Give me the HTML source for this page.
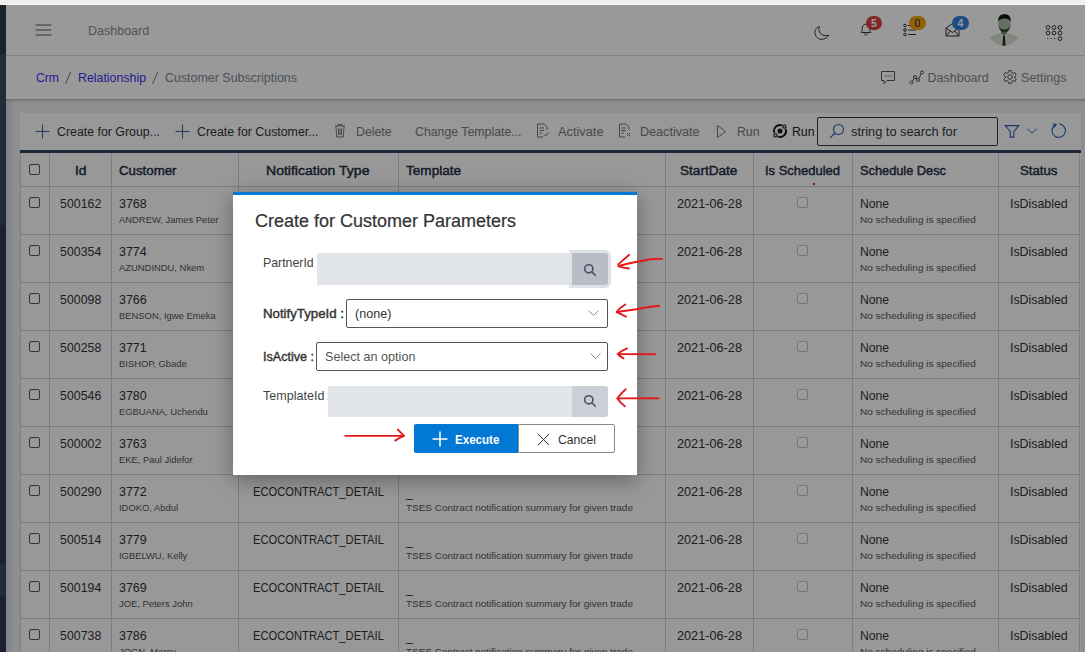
<!DOCTYPE html>
<html><head><meta charset="utf-8"><style>
html,body{margin:0;padding:0;width:1085px;height:652px;overflow:hidden;background:#fff;}
body{position:relative;font-family:"Liberation Sans",sans-serif;}
.a{position:absolute;}
.t{position:absolute;white-space:nowrap;line-height:1;}
.badge{position:absolute;border-radius:8px;color:#fff;font-size:10.5px;font-weight:700;text-align:center;line-height:14px;font-family:"Liberation Sans",sans-serif;}
</style></head><body>
<div class="a" style="left:0px;top:0px;width:1085px;height:5px;background:#efefef;"></div>
<div class="a" style="left:0px;top:4px;width:1085px;height:1px;background:#f6f6f6;"></div>
<div class="a" style="left:0px;top:5px;width:6px;height:647px;background:#2d3750;"></div>
<div class="a" style="left:0px;top:54px;width:6px;height:171px;background:#38495f;"></div>
<div class="a" style="left:0px;top:563px;width:6px;height:32px;background:#38495f;"></div>
<div class="a" style="left:6px;top:99px;width:1079px;height:553px;background:#eceef2;"></div>
<div class="a" style="left:6px;top:99px;width:8px;height:553px;background:linear-gradient(to right,rgba(0,0,0,0.10),rgba(0,0,0,0));"></div>
<div class="a" style="left:6px;top:5px;width:1079px;height:50px;background:#fff;border-bottom:1px solid #dadada;"></div>
<div class="a" style="left:6px;top:56px;width:1079px;height:43px;background:#fff;"></div>
<div class="a" style="left:6px;top:99px;width:1079px;height:4px;background:linear-gradient(to bottom,rgba(0,0,0,0.22),rgba(0,0,0,0.05) 60%,rgba(0,0,0,0));"></div>
<svg class="a" style="left:35px;top:24.3px" width="17" height="12" viewBox="0 0 17 12"><g stroke="#50555f" stroke-width="1.0" stroke-linecap="round"><line x1="1" y1="1" x2="16" y2="1"/><line x1="1" y1="6" x2="16" y2="6"/><line x1="1" y1="11" x2="16" y2="11"/></g></svg>
<div class="t" style="left:88.00px;top:24.82px;font-size:12.5px;font-weight:400;color:#8a8a8a;">Dashboard</div>
<svg class="a" style="left:813px;top:25px" width="17" height="16" viewBox="0 0 17 16"><path d="M6.5 1.5 C3 2.5 1.5 5.5 2 8.5 C2.6 12 5.6 14.5 9.2 14.3 C12 14.1 14.3 12.5 15.5 10.2 C11.5 11.8 7 9.5 6 5.6 C5.7 4.2 5.8 2.8 6.5 1.5 Z" fill="none" stroke="#333" stroke-width="1"/></svg>
<svg class="a" style="left:859px;top:22.3px" width="14" height="14" viewBox="0 0 14 14"><path d="M2.2 10.5 C3.2 9.5 3.2 8.5 3.2 6.5 C3.2 3.8 4.8 2.2 7 2.2 C9.2 2.2 10.8 3.8 10.8 6.5 C10.8 8.5 10.8 9.5 11.8 10.5 Z M5.5 11.5 C5.7 12.6 6.2 13 7 13 C7.8 13 8.3 12.6 8.5 11.5" fill="none" stroke="#333" stroke-width="1"/></svg>
<div class="badge" style="left:866px;top:16px;width:16px;height:14px;background:#dc3f3f;">5</div>
<svg class="a" style="left:903px;top:23px" width="14" height="14" viewBox="0 0 14 14"><g fill="none" stroke="#333" stroke-width="1"><circle cx="2" cy="2.5" r="1.3"/><circle cx="2" cy="7" r="1.3"/><circle cx="2" cy="11.5" r="1.3"/><line x1="5" y1="2.5" x2="13" y2="2.5"/><line x1="5" y1="7" x2="13" y2="7"/><line x1="5" y1="11.5" x2="13" y2="11.5"/></g></svg>
<div class="badge" style="left:909px;top:16px;width:17px;height:14px;background:#f2a20c;color:#1d2a44;font-weight:400;">0</div>
<svg class="a" style="left:945px;top:22px" width="15" height="15" viewBox="0 0 15 15"><g fill="none" stroke="#333" stroke-width="1"><path d="M1 6 L7.5 1.5 L14 6 L14 14 L1 14 Z"/><path d="M1 6 L7.5 10.5 L14 6"/><path d="M1 14 L5.5 9"/><path d="M14 14 L9.5 9"/></g></svg>
<div class="badge" style="left:952px;top:16px;width:17px;height:14px;background:#2d7fdc;">4</div>
<svg class="a" style="left:987px;top:12px" width="34" height="36" viewBox="0 0 34 36">
<defs><clipPath id="cc"><circle cx="17" cy="18.5" r="15.2"/></clipPath></defs>
<g clip-path="url(#cc)"><path d="M0 36 L0 26 C4 24 9 22.5 14 21.5 L17 22 L20 21.5 C25 22.5 30 24 34 26 L34 36 Z" fill="#d4e2d0"/>
<path d="M14 21.5 L17 24 L20 21.5 L19.5 36 L14.5 36 Z" fill="#f2f6f2"/>
<path d="M16 23.5 L18 23.5 L18.8 36 L15.2 36 Z" fill="#2e302e"/>
<path d="M14 18 L20 18 L20 21.5 L17 24 L14 21.5 Z" fill="#8a9a88"/></g>
<ellipse cx="17.5" cy="12" rx="6.2" ry="8.6" fill="#a9bca6"/>
<path d="M11.2 10 C11 4.5 13.2 2.2 17.5 2.2 C21.8 2.2 24 4.5 23.8 10 C22.6 7.2 20.5 6.6 17.5 6.6 C14.5 6.6 12.4 7.2 11.2 10 Z" fill="#151515"/>
<path d="M11.6 13 C12.4 19 15 20.6 17.5 20.6 C20 20.6 22.6 19 23.4 13 C22.4 16.5 20 17.5 17.5 17.5 C15 17.5 12.6 16.5 11.6 13 Z" fill="#3a423a"/>
</svg>
<svg class="a" style="left:1044px;top:23px" width="20" height="19" viewBox="0 0 20 19"><g fill="none" stroke="#333" stroke-width="1"><circle cx="4" cy="4.5" r="1.9"/><circle cx="10" cy="4.5" r="1.9"/><circle cx="16" cy="4.5" r="1.9"/><circle cx="4" cy="10" r="1.9"/><circle cx="10" cy="10" r="1.9"/><circle cx="16" cy="10" r="1.9"/><circle cx="16" cy="15.6" r="1.9"/></g><g fill="#444"><rect x="3.2" y="15" width="1.1" height="1.1"/><rect x="6.6" y="15" width="1.1" height="1.1"/><rect x="10" y="15" width="1.1" height="1.1"/></g></svg>
<div class="t" style="left:35.50px;top:71.82px;font-size:12.5px;font-weight:400;color:#3a2ff2;transform:scaleX(0.9745);transform-origin:0 0;">Crm</div>
<svg class="a" style="left:64px;top:71px" width="8" height="14" viewBox="0 0 8 14"><line x1="6.6" y1="1.3" x2="1.6" y2="12.6" stroke="#7d8595" stroke-width="1.1"/></svg>
<div class="t" style="left:77.50px;top:71.82px;font-size:12.5px;font-weight:400;color:#3a2ff2;transform:scaleX(0.9885);transform-origin:0 0;">Relationship</div>
<svg class="a" style="left:151px;top:71px" width="8" height="14" viewBox="0 0 8 14"><line x1="6.6" y1="1.3" x2="1.6" y2="12.6" stroke="#7d8595" stroke-width="1.1"/></svg>
<div class="t" style="left:164.50px;top:71.82px;font-size:12.5px;font-weight:400;color:#7d8595;transform:scaleX(0.9948);transform-origin:0 0;">Customer Subscriptions</div>
<svg class="a" style="left:880px;top:70px" width="16" height="15" viewBox="0 0 16 15"><path d="M1.5 1.5 H14.5 V10.5 H7 L4 13.5 V10.5 H1.5 Z" fill="none" stroke="#555" stroke-width="1"/><g fill="#555"><rect x="5" y="5.5" width="1.2" height="1.2"/><rect x="7.5" y="5.5" width="1.2" height="1.2"/><rect x="10" y="5.5" width="1.2" height="1.2"/></g></svg>
<svg class="a" style="left:909px;top:70px" width="16" height="15" viewBox="0 0 16 15"><g fill="none" stroke="#555" stroke-width="1"><path d="M2.5 12.5 L6 7 L9 10 L13 2.5"/><circle cx="2.5" cy="12.5" r="1.5" fill="#fff"/><circle cx="6" cy="7" r="1.5" fill="#fff"/><circle cx="9" cy="10" r="1.5" fill="#fff"/><circle cx="13" cy="2.5" r="1.5" fill="#fff"/></g></svg>
<div class="t" style="left:927.50px;top:71.82px;font-size:12.5px;font-weight:400;color:#858585;">Dashboard</div>
<svg class="a" style="left:1002px;top:69px" width="16" height="16" viewBox="0 0 16 16"><g fill="none" stroke="#555" stroke-width="1"><circle cx="8" cy="8" r="2.3"/><path d="M6.8 1.5 H9.2 L9.6 3.4 L11.2 4.3 L13 3.6 L14.2 5.7 L12.8 7 V9 L14.2 10.3 L13 12.4 L11.2 11.7 L9.6 12.6 L9.2 14.5 H6.8 L6.4 12.6 L4.8 11.7 L3 12.4 L1.8 10.3 L3.2 9 V7 L1.8 5.7 L3 3.6 L4.8 4.3 L6.4 3.4 Z"/></g></svg>
<div class="t" style="left:1020.50px;top:71.82px;font-size:12.5px;font-weight:400;color:#858585;transform:scaleX(1.0074);transform-origin:0 0;">Settings</div>
<div class="a" style="left:20px;top:113px;width:1061px;height:37px;background:#fdfdfd;"></div>
<svg class="a" style="left:35px;top:124px" width="15" height="15" viewBox="0 0 15 15"><g stroke="#4a6a9a" stroke-width="1.1"><line x1="7.5" y1="0.5" x2="7.5" y2="14.5"/><line x1="0.5" y1="7.5" x2="14.5" y2="7.5"/></g></svg>
<div class="t" style="left:56.50px;top:126.02px;font-size:12.5px;font-weight:400;color:#333;transform:scaleX(0.9884);transform-origin:0 0;">Create for Group...</div>
<svg class="a" style="left:175px;top:124px" width="15" height="15" viewBox="0 0 15 15"><g stroke="#4a6a9a" stroke-width="1.1"><line x1="7.5" y1="0.5" x2="7.5" y2="14.5"/><line x1="0.5" y1="7.5" x2="14.5" y2="7.5"/></g></svg>
<div class="t" style="left:196.50px;top:126.02px;font-size:12.5px;font-weight:400;color:#333;transform:scaleX(0.9881);transform-origin:0 0;">Create for Customer...</div>
<svg class="a" style="left:334px;top:123px" width="12" height="15" viewBox="0 0 12 15"><g fill="none" stroke="#777" stroke-width="1"><path d="M1 3 H11"/><path d="M4 3 V1.5 H8 V3"/><path d="M2 3 L2.6 14 H9.4 L10 3"/><path d="M4.5 5.5 V12 M6 5.5 V12 M7.5 5.5 V12"/></g></svg>
<div class="t" style="left:355.50px;top:126.02px;font-size:12.5px;font-weight:400;color:#7a7a7a;transform:scaleX(0.9853);transform-origin:0 0;">Delete</div>
<div class="t" style="left:414.50px;top:126.02px;font-size:12.5px;font-weight:400;color:#7a7a7a;transform:scaleX(0.9846);transform-origin:0 0;">Change Template...</div>
<svg class="a" style="left:536px;top:123px" width="14" height="15" viewBox="0 0 14 15"><g fill="none" stroke="#777" stroke-width="1"><path d="M1.5 1 H8 L11 4 V7"/><path d="M1.5 1 V14 H7"/><path d="M3.5 5 H8 M3.5 7.5 H8 M3.5 10 H6"/><path d="M8 11.5 L9.5 13 L12.5 9.5"/></g></svg>
<div class="t" style="left:557.50px;top:126.02px;font-size:12.5px;font-weight:400;color:#7a7a7a;transform:scaleX(1.0233);transform-origin:0 0;">Activate</div>
<svg class="a" style="left:618px;top:123px" width="14" height="15" viewBox="0 0 14 15"><g fill="none" stroke="#777" stroke-width="1"><path d="M1.5 1 H8 L11 4 V7"/><path d="M1.5 1 V14 H7"/><path d="M3.5 5 H8 M3.5 7.5 H8 M3.5 10 H6"/><path d="M9 10 L12 13 M12 10 L9 13"/></g></svg>
<div class="t" style="left:639.50px;top:126.02px;font-size:12.5px;font-weight:400;color:#7a7a7a;transform:scaleX(1.0075);transform-origin:0 0;">Deactivate</div>
<svg class="a" style="left:716px;top:124px" width="11" height="15" viewBox="0 0 11 15"><path d="M1.5 1.5 L9.5 7.5 L1.5 13.5 Z" fill="none" stroke="#777" stroke-width="1"/></svg>
<div class="t" style="left:736.50px;top:126.02px;font-size:12.5px;font-weight:400;color:#7a7a7a;transform:scaleX(0.9813);transform-origin:0 0;">Run</div>
<svg class="a" style="left:771px;top:123px" width="18" height="17" viewBox="0 0 18 17"><g fill="none" stroke="#1a1a1a" stroke-width="1.9"><path d="M14.64 5.95 A6 6 0 0 1 6.95 13.64"/><path d="M3.36 10.05 A6 6 0 0 1 11.05 2.36"/></g><g fill="none" stroke="#1a1a1a" stroke-width="1.2"><circle cx="13.4" cy="3.6" r="1.6"/><circle cx="4.6" cy="12.4" r="1.6"/></g><circle cx="9" cy="8" r="2.5" fill="#1a1a1a"/></svg>
<div class="t" style="left:792.00px;top:126.02px;font-size:12.5px;font-weight:400;color:#222;transform:scaleX(0.9813);transform-origin:0 0;">Run</div>
<div class="a" style="left:817px;top:117px;width:179px;height:27px;background:#fff;border:1px solid #333;border-radius:2px;"></div>
<svg class="a" style="left:829px;top:123px" width="16" height="16" viewBox="0 0 16 16"><g fill="none" stroke="#2f63bd" stroke-width="1.1"><circle cx="9.5" cy="6.5" r="5"/><line x1="6" y1="10" x2="1" y2="15"/></g></svg>
<div class="t" style="left:850.50px;top:126.02px;font-size:12.5px;font-weight:400;color:#333;transform:scaleX(1.0240);transform-origin:0 0;">string to search for</div>
<svg class="a" style="left:1004px;top:123.5px" width="16" height="15" viewBox="0 0 16 15"><path d="M1.2 1.6 H14.8 L9.9 7.5 V13.1 H6.3 V7.5 Z" fill="none" stroke="#2b5db0" stroke-width="1.1" stroke-linejoin="miter"/></svg>
<svg class="a" style="left:1026px;top:127px" width="12" height="8" viewBox="0 0 12 8"><path d="M1 1.5 L6 6 L11 1.5" fill="none" stroke="#2f63bd" stroke-width="1"/></svg>
<svg class="a" style="left:1050px;top:122px" width="18" height="17" viewBox="0 0 18 17"><g fill="none" stroke="#2f63bd" stroke-width="1.1"><path d="M4.5 3.5 A6.7 6.7 0 1 0 9 2"/></g><path d="M2.5 1.5 L7 2 L4.5 6 Z" fill="#2f63bd"/></svg>
<div class="a" style="left:20px;top:150px;width:1061px;height:3px;background:#33415e;"></div>
<div class="a" style="left:20px;top:153px;width:1061px;height:499px;background:#fdfdfd;"></div>
<div class="a" style="left:20px;top:153px;width:1px;height:499px;background:#ced1d7;"></div>
<div class="a" style="left:49px;top:153px;width:1px;height:499px;background:#ced1d7;"></div>
<div class="a" style="left:111px;top:153px;width:1px;height:499px;background:#ced1d7;"></div>
<div class="a" style="left:238px;top:153px;width:1px;height:499px;background:#ced1d7;"></div>
<div class="a" style="left:398px;top:153px;width:1px;height:499px;background:#ced1d7;"></div>
<div class="a" style="left:665px;top:153px;width:1px;height:499px;background:#ced1d7;"></div>
<div class="a" style="left:753px;top:153px;width:1px;height:499px;background:#ced1d7;"></div>
<div class="a" style="left:852px;top:153px;width:1px;height:499px;background:#ced1d7;"></div>
<div class="a" style="left:998px;top:153px;width:1px;height:499px;background:#ced1d7;"></div>
<div class="a" style="left:1079px;top:153px;width:1px;height:499px;background:#ced1d7;"></div>
<div class="a" style="left:20px;top:186px;width:1060px;height:1px;background:#ced1d7;"></div>
<div class="a" style="left:20px;top:234px;width:1060px;height:1px;background:#ced1d7;"></div>
<div class="a" style="left:20px;top:282px;width:1060px;height:1px;background:#ced1d7;"></div>
<div class="a" style="left:20px;top:330px;width:1060px;height:1px;background:#ced1d7;"></div>
<div class="a" style="left:20px;top:378px;width:1060px;height:1px;background:#ced1d7;"></div>
<div class="a" style="left:20px;top:426px;width:1060px;height:1px;background:#ced1d7;"></div>
<div class="a" style="left:20px;top:474px;width:1060px;height:1px;background:#ced1d7;"></div>
<div class="a" style="left:20px;top:522px;width:1060px;height:1px;background:#ced1d7;"></div>
<div class="a" style="left:20px;top:570px;width:1060px;height:1px;background:#ced1d7;"></div>
<div class="a" style="left:20px;top:618px;width:1060px;height:1px;background:#ced1d7;"></div>
<div class="a" style="left:29px;top:164px;width:11px;height:11px;box-sizing:border-box;border:1px solid #555;border-radius:2px;background:#fff;"></div>
<div class="t" style="left:74.75px;top:164.59px;font-size:12.3px;font-weight:400;color:#1f2c44;transform:scaleX(1.1211);transform-origin:0 0;-webkit-text-stroke:0.4px #1f2c44;">Id</div>
<div class="t" style="left:119.00px;top:164.59px;font-size:12.3px;font-weight:400;color:#1f2c44;transform:scaleX(1.0785);transform-origin:0 0;-webkit-text-stroke:0.4px #1f2c44;">Customer</div>
<div class="t" style="left:266.25px;top:164.59px;font-size:12.3px;font-weight:400;color:#1f2c44;transform:scaleX(1.1410);transform-origin:0 0;-webkit-text-stroke:0.4px #1f2c44;">Notification Type</div>
<div class="t" style="left:405.50px;top:164.59px;font-size:12.3px;font-weight:400;color:#1f2c44;transform:scaleX(1.1060);transform-origin:0 0;-webkit-text-stroke:0.4px #1f2c44;">Template</div>
<div class="t" style="left:680.30px;top:164.59px;font-size:12.3px;font-weight:400;color:#1f2c44;transform:scaleX(1.1048);transform-origin:0 0;-webkit-text-stroke:0.4px #1f2c44;">StartDate</div>
<div class="t" style="left:765.00px;top:164.59px;font-size:12.3px;font-weight:400;color:#1f2c44;transform:scaleX(1.0546);transform-origin:0 0;-webkit-text-stroke:0.4px #1f2c44;">Is Scheduled</div>
<div class="t" style="left:859.50px;top:164.59px;font-size:12.3px;font-weight:400;color:#1f2c44;transform:scaleX(1.0395);transform-origin:0 0;-webkit-text-stroke:0.4px #1f2c44;">Schedule Desc</div>
<div class="t" style="left:1019.80px;top:164.59px;font-size:12.3px;font-weight:400;color:#1f2c44;transform:scaleX(1.0725);transform-origin:0 0;-webkit-text-stroke:0.4px #1f2c44;">Status</div>
<div class="a" style="left:813px;top:183px;width:2px;height:2px;background:#ff2020;"></div>
<div class="a" style="left:29px;top:197px;width:11px;height:11px;box-sizing:border-box;border:1px solid #555;border-radius:2px;background:#fff;"></div>
<div class="t" style="left:59.85px;top:198.37px;font-size:12.2px;font-weight:400;color:#333;transform:scaleX(1.0146);transform-origin:0 0;">500162</div>
<div class="t" style="left:119.00px;top:198.37px;font-size:12.2px;font-weight:400;color:#333;transform:scaleX(1.0207);transform-origin:0 0;">3768</div>
<div class="t" style="left:119.00px;top:214.87px;font-size:9.6px;font-weight:400;color:#555;transform:scaleX(0.98);transform-origin:0 0;">ANDREW, James Peter</div>
<div class="t" style="left:252.50px;top:198.37px;font-size:12.2px;font-weight:400;color:#333;transform:scaleX(0.9174);transform-origin:0 0;">ECOCONTRACT_DETAIL</div>
<div class="t" style="left:406.00px;top:198.67px;font-size:12.2px;font-weight:400;color:#333;">_</div>
<div class="t" style="left:406.00px;top:214.70px;font-size:9.8px;font-weight:400;color:#555;transform:scaleX(1.0165);transform-origin:0 0;">TSES Contract notification summary for given trade</div>
<div class="t" style="left:676.50px;top:198.37px;font-size:12.2px;font-weight:400;color:#333;transform:scaleX(1.0417);transform-origin:0 0;">2021-06-28</div>
<div class="a" style="left:797px;top:197px;width:11px;height:11px;box-sizing:border-box;border:1px solid #c4c4c4;border-radius:2px;background:#fff;"></div>
<div class="t" style="left:860.00px;top:198.37px;font-size:12.2px;font-weight:400;color:#333;">None</div>
<div class="t" style="left:860.00px;top:214.70px;font-size:9.8px;font-weight:400;color:#555;transform:scaleX(1.0220);transform-origin:0 0;">No scheduling is specified</div>
<div class="t" style="left:1009.60px;top:198.37px;font-size:12.2px;font-weight:400;color:#333;transform:scaleX(1.0148);transform-origin:0 0;">IsDisabled</div>
<div class="a" style="left:29px;top:245px;width:11px;height:11px;box-sizing:border-box;border:1px solid #555;border-radius:2px;background:#fff;"></div>
<div class="t" style="left:59.85px;top:246.37px;font-size:12.2px;font-weight:400;color:#333;transform:scaleX(1.0146);transform-origin:0 0;">500354</div>
<div class="t" style="left:119.00px;top:246.37px;font-size:12.2px;font-weight:400;color:#333;transform:scaleX(1.0207);transform-origin:0 0;">3774</div>
<div class="t" style="left:119.00px;top:262.87px;font-size:9.6px;font-weight:400;color:#555;transform:scaleX(0.98);transform-origin:0 0;">AZUNDINDU, Nkem</div>
<div class="t" style="left:252.50px;top:246.37px;font-size:12.2px;font-weight:400;color:#333;transform:scaleX(0.9174);transform-origin:0 0;">ECOCONTRACT_DETAIL</div>
<div class="t" style="left:406.00px;top:246.67px;font-size:12.2px;font-weight:400;color:#333;">_</div>
<div class="t" style="left:406.00px;top:262.70px;font-size:9.8px;font-weight:400;color:#555;transform:scaleX(1.0165);transform-origin:0 0;">TSES Contract notification summary for given trade</div>
<div class="t" style="left:676.50px;top:246.37px;font-size:12.2px;font-weight:400;color:#333;transform:scaleX(1.0417);transform-origin:0 0;">2021-06-28</div>
<div class="a" style="left:797px;top:245px;width:11px;height:11px;box-sizing:border-box;border:1px solid #c4c4c4;border-radius:2px;background:#fff;"></div>
<div class="t" style="left:860.00px;top:246.37px;font-size:12.2px;font-weight:400;color:#333;">None</div>
<div class="t" style="left:860.00px;top:262.70px;font-size:9.8px;font-weight:400;color:#555;transform:scaleX(1.0220);transform-origin:0 0;">No scheduling is specified</div>
<div class="t" style="left:1009.60px;top:246.37px;font-size:12.2px;font-weight:400;color:#333;transform:scaleX(1.0148);transform-origin:0 0;">IsDisabled</div>
<div class="a" style="left:29px;top:293px;width:11px;height:11px;box-sizing:border-box;border:1px solid #555;border-radius:2px;background:#fff;"></div>
<div class="t" style="left:59.85px;top:294.37px;font-size:12.2px;font-weight:400;color:#333;transform:scaleX(1.0146);transform-origin:0 0;">500098</div>
<div class="t" style="left:119.00px;top:294.37px;font-size:12.2px;font-weight:400;color:#333;transform:scaleX(1.0207);transform-origin:0 0;">3766</div>
<div class="t" style="left:119.00px;top:310.87px;font-size:9.6px;font-weight:400;color:#555;transform:scaleX(0.98);transform-origin:0 0;">BENSON, Igwe Emeka</div>
<div class="t" style="left:252.50px;top:294.37px;font-size:12.2px;font-weight:400;color:#333;transform:scaleX(0.9174);transform-origin:0 0;">ECOCONTRACT_DETAIL</div>
<div class="t" style="left:406.00px;top:294.67px;font-size:12.2px;font-weight:400;color:#333;">_</div>
<div class="t" style="left:406.00px;top:310.70px;font-size:9.8px;font-weight:400;color:#555;transform:scaleX(1.0165);transform-origin:0 0;">TSES Contract notification summary for given trade</div>
<div class="t" style="left:676.50px;top:294.37px;font-size:12.2px;font-weight:400;color:#333;transform:scaleX(1.0417);transform-origin:0 0;">2021-06-28</div>
<div class="a" style="left:797px;top:293px;width:11px;height:11px;box-sizing:border-box;border:1px solid #c4c4c4;border-radius:2px;background:#fff;"></div>
<div class="t" style="left:860.00px;top:294.37px;font-size:12.2px;font-weight:400;color:#333;">None</div>
<div class="t" style="left:860.00px;top:310.70px;font-size:9.8px;font-weight:400;color:#555;transform:scaleX(1.0220);transform-origin:0 0;">No scheduling is specified</div>
<div class="t" style="left:1009.60px;top:294.37px;font-size:12.2px;font-weight:400;color:#333;transform:scaleX(1.0148);transform-origin:0 0;">IsDisabled</div>
<div class="a" style="left:29px;top:341px;width:11px;height:11px;box-sizing:border-box;border:1px solid #555;border-radius:2px;background:#fff;"></div>
<div class="t" style="left:59.85px;top:342.37px;font-size:12.2px;font-weight:400;color:#333;transform:scaleX(1.0146);transform-origin:0 0;">500258</div>
<div class="t" style="left:119.00px;top:342.37px;font-size:12.2px;font-weight:400;color:#333;transform:scaleX(1.0207);transform-origin:0 0;">3771</div>
<div class="t" style="left:119.00px;top:358.87px;font-size:9.6px;font-weight:400;color:#555;transform:scaleX(0.98);transform-origin:0 0;">BISHOP, Gbade</div>
<div class="t" style="left:252.50px;top:342.37px;font-size:12.2px;font-weight:400;color:#333;transform:scaleX(0.9174);transform-origin:0 0;">ECOCONTRACT_DETAIL</div>
<div class="t" style="left:406.00px;top:342.67px;font-size:12.2px;font-weight:400;color:#333;">_</div>
<div class="t" style="left:406.00px;top:358.70px;font-size:9.8px;font-weight:400;color:#555;transform:scaleX(1.0165);transform-origin:0 0;">TSES Contract notification summary for given trade</div>
<div class="t" style="left:676.50px;top:342.37px;font-size:12.2px;font-weight:400;color:#333;transform:scaleX(1.0417);transform-origin:0 0;">2021-06-28</div>
<div class="a" style="left:797px;top:341px;width:11px;height:11px;box-sizing:border-box;border:1px solid #c4c4c4;border-radius:2px;background:#fff;"></div>
<div class="t" style="left:860.00px;top:342.37px;font-size:12.2px;font-weight:400;color:#333;">None</div>
<div class="t" style="left:860.00px;top:358.70px;font-size:9.8px;font-weight:400;color:#555;transform:scaleX(1.0220);transform-origin:0 0;">No scheduling is specified</div>
<div class="t" style="left:1009.60px;top:342.37px;font-size:12.2px;font-weight:400;color:#333;transform:scaleX(1.0148);transform-origin:0 0;">IsDisabled</div>
<div class="a" style="left:29px;top:389px;width:11px;height:11px;box-sizing:border-box;border:1px solid #555;border-radius:2px;background:#fff;"></div>
<div class="t" style="left:59.85px;top:390.37px;font-size:12.2px;font-weight:400;color:#333;transform:scaleX(1.0146);transform-origin:0 0;">500546</div>
<div class="t" style="left:119.00px;top:390.37px;font-size:12.2px;font-weight:400;color:#333;transform:scaleX(1.0207);transform-origin:0 0;">3780</div>
<div class="t" style="left:119.00px;top:406.87px;font-size:9.6px;font-weight:400;color:#555;transform:scaleX(0.98);transform-origin:0 0;">EGBUANA, Uchendu</div>
<div class="t" style="left:252.50px;top:390.37px;font-size:12.2px;font-weight:400;color:#333;transform:scaleX(0.9174);transform-origin:0 0;">ECOCONTRACT_DETAIL</div>
<div class="t" style="left:406.00px;top:390.67px;font-size:12.2px;font-weight:400;color:#333;">_</div>
<div class="t" style="left:406.00px;top:406.70px;font-size:9.8px;font-weight:400;color:#555;transform:scaleX(1.0165);transform-origin:0 0;">TSES Contract notification summary for given trade</div>
<div class="t" style="left:676.50px;top:390.37px;font-size:12.2px;font-weight:400;color:#333;transform:scaleX(1.0417);transform-origin:0 0;">2021-06-28</div>
<div class="a" style="left:797px;top:389px;width:11px;height:11px;box-sizing:border-box;border:1px solid #c4c4c4;border-radius:2px;background:#fff;"></div>
<div class="t" style="left:860.00px;top:390.37px;font-size:12.2px;font-weight:400;color:#333;">None</div>
<div class="t" style="left:860.00px;top:406.70px;font-size:9.8px;font-weight:400;color:#555;transform:scaleX(1.0220);transform-origin:0 0;">No scheduling is specified</div>
<div class="t" style="left:1009.60px;top:390.37px;font-size:12.2px;font-weight:400;color:#333;transform:scaleX(1.0148);transform-origin:0 0;">IsDisabled</div>
<div class="a" style="left:29px;top:437px;width:11px;height:11px;box-sizing:border-box;border:1px solid #555;border-radius:2px;background:#fff;"></div>
<div class="t" style="left:59.85px;top:438.37px;font-size:12.2px;font-weight:400;color:#333;transform:scaleX(1.0146);transform-origin:0 0;">500002</div>
<div class="t" style="left:119.00px;top:438.37px;font-size:12.2px;font-weight:400;color:#333;transform:scaleX(1.0207);transform-origin:0 0;">3763</div>
<div class="t" style="left:119.00px;top:454.87px;font-size:9.6px;font-weight:400;color:#555;transform:scaleX(0.98);transform-origin:0 0;">EKE, Paul Jidefor</div>
<div class="t" style="left:252.50px;top:438.37px;font-size:12.2px;font-weight:400;color:#333;transform:scaleX(0.9174);transform-origin:0 0;">ECOCONTRACT_DETAIL</div>
<div class="t" style="left:406.00px;top:438.67px;font-size:12.2px;font-weight:400;color:#333;">_</div>
<div class="t" style="left:406.00px;top:454.70px;font-size:9.8px;font-weight:400;color:#555;transform:scaleX(1.0165);transform-origin:0 0;">TSES Contract notification summary for given trade</div>
<div class="t" style="left:676.50px;top:438.37px;font-size:12.2px;font-weight:400;color:#333;transform:scaleX(1.0417);transform-origin:0 0;">2021-06-28</div>
<div class="a" style="left:797px;top:437px;width:11px;height:11px;box-sizing:border-box;border:1px solid #c4c4c4;border-radius:2px;background:#fff;"></div>
<div class="t" style="left:860.00px;top:438.37px;font-size:12.2px;font-weight:400;color:#333;">None</div>
<div class="t" style="left:860.00px;top:454.70px;font-size:9.8px;font-weight:400;color:#555;transform:scaleX(1.0220);transform-origin:0 0;">No scheduling is specified</div>
<div class="t" style="left:1009.60px;top:438.37px;font-size:12.2px;font-weight:400;color:#333;transform:scaleX(1.0148);transform-origin:0 0;">IsDisabled</div>
<div class="a" style="left:29px;top:485px;width:11px;height:11px;box-sizing:border-box;border:1px solid #555;border-radius:2px;background:#fff;"></div>
<div class="t" style="left:59.85px;top:486.37px;font-size:12.2px;font-weight:400;color:#333;transform:scaleX(1.0146);transform-origin:0 0;">500290</div>
<div class="t" style="left:119.00px;top:486.37px;font-size:12.2px;font-weight:400;color:#333;transform:scaleX(1.0207);transform-origin:0 0;">3772</div>
<div class="t" style="left:119.00px;top:502.87px;font-size:9.6px;font-weight:400;color:#555;transform:scaleX(0.98);transform-origin:0 0;">IDOKO, Abdul</div>
<div class="t" style="left:252.50px;top:486.37px;font-size:12.2px;font-weight:400;color:#333;transform:scaleX(0.9174);transform-origin:0 0;">ECOCONTRACT_DETAIL</div>
<div class="t" style="left:406.00px;top:486.67px;font-size:12.2px;font-weight:400;color:#333;">_</div>
<div class="t" style="left:406.00px;top:502.70px;font-size:9.8px;font-weight:400;color:#555;transform:scaleX(1.0165);transform-origin:0 0;">TSES Contract notification summary for given trade</div>
<div class="t" style="left:676.50px;top:486.37px;font-size:12.2px;font-weight:400;color:#333;transform:scaleX(1.0417);transform-origin:0 0;">2021-06-28</div>
<div class="a" style="left:797px;top:485px;width:11px;height:11px;box-sizing:border-box;border:1px solid #c4c4c4;border-radius:2px;background:#fff;"></div>
<div class="t" style="left:860.00px;top:486.37px;font-size:12.2px;font-weight:400;color:#333;">None</div>
<div class="t" style="left:860.00px;top:502.70px;font-size:9.8px;font-weight:400;color:#555;transform:scaleX(1.0220);transform-origin:0 0;">No scheduling is specified</div>
<div class="t" style="left:1009.60px;top:486.37px;font-size:12.2px;font-weight:400;color:#333;transform:scaleX(1.0148);transform-origin:0 0;">IsDisabled</div>
<div class="a" style="left:29px;top:533px;width:11px;height:11px;box-sizing:border-box;border:1px solid #555;border-radius:2px;background:#fff;"></div>
<div class="t" style="left:59.85px;top:534.37px;font-size:12.2px;font-weight:400;color:#333;transform:scaleX(1.0146);transform-origin:0 0;">500514</div>
<div class="t" style="left:119.00px;top:534.37px;font-size:12.2px;font-weight:400;color:#333;transform:scaleX(1.0207);transform-origin:0 0;">3779</div>
<div class="t" style="left:119.00px;top:550.87px;font-size:9.6px;font-weight:400;color:#555;transform:scaleX(0.98);transform-origin:0 0;">IGBELWU, Kelly</div>
<div class="t" style="left:252.50px;top:534.37px;font-size:12.2px;font-weight:400;color:#333;transform:scaleX(0.9174);transform-origin:0 0;">ECOCONTRACT_DETAIL</div>
<div class="t" style="left:406.00px;top:534.67px;font-size:12.2px;font-weight:400;color:#333;">_</div>
<div class="t" style="left:406.00px;top:550.70px;font-size:9.8px;font-weight:400;color:#555;transform:scaleX(1.0165);transform-origin:0 0;">TSES Contract notification summary for given trade</div>
<div class="t" style="left:676.50px;top:534.37px;font-size:12.2px;font-weight:400;color:#333;transform:scaleX(1.0417);transform-origin:0 0;">2021-06-28</div>
<div class="a" style="left:797px;top:533px;width:11px;height:11px;box-sizing:border-box;border:1px solid #c4c4c4;border-radius:2px;background:#fff;"></div>
<div class="t" style="left:860.00px;top:534.37px;font-size:12.2px;font-weight:400;color:#333;">None</div>
<div class="t" style="left:860.00px;top:550.70px;font-size:9.8px;font-weight:400;color:#555;transform:scaleX(1.0220);transform-origin:0 0;">No scheduling is specified</div>
<div class="t" style="left:1009.60px;top:534.37px;font-size:12.2px;font-weight:400;color:#333;transform:scaleX(1.0148);transform-origin:0 0;">IsDisabled</div>
<div class="a" style="left:29px;top:581px;width:11px;height:11px;box-sizing:border-box;border:1px solid #555;border-radius:2px;background:#fff;"></div>
<div class="t" style="left:59.85px;top:582.37px;font-size:12.2px;font-weight:400;color:#333;transform:scaleX(1.0146);transform-origin:0 0;">500194</div>
<div class="t" style="left:119.00px;top:582.37px;font-size:12.2px;font-weight:400;color:#333;transform:scaleX(1.0207);transform-origin:0 0;">3769</div>
<div class="t" style="left:119.00px;top:598.87px;font-size:9.6px;font-weight:400;color:#555;transform:scaleX(0.98);transform-origin:0 0;">JOE, Peters John</div>
<div class="t" style="left:252.50px;top:582.37px;font-size:12.2px;font-weight:400;color:#333;transform:scaleX(0.9174);transform-origin:0 0;">ECOCONTRACT_DETAIL</div>
<div class="t" style="left:406.00px;top:582.67px;font-size:12.2px;font-weight:400;color:#333;">_</div>
<div class="t" style="left:406.00px;top:598.70px;font-size:9.8px;font-weight:400;color:#555;transform:scaleX(1.0165);transform-origin:0 0;">TSES Contract notification summary for given trade</div>
<div class="t" style="left:676.50px;top:582.37px;font-size:12.2px;font-weight:400;color:#333;transform:scaleX(1.0417);transform-origin:0 0;">2021-06-28</div>
<div class="a" style="left:797px;top:581px;width:11px;height:11px;box-sizing:border-box;border:1px solid #c4c4c4;border-radius:2px;background:#fff;"></div>
<div class="t" style="left:860.00px;top:582.37px;font-size:12.2px;font-weight:400;color:#333;">None</div>
<div class="t" style="left:860.00px;top:598.70px;font-size:9.8px;font-weight:400;color:#555;transform:scaleX(1.0220);transform-origin:0 0;">No scheduling is specified</div>
<div class="t" style="left:1009.60px;top:582.37px;font-size:12.2px;font-weight:400;color:#333;transform:scaleX(1.0148);transform-origin:0 0;">IsDisabled</div>
<div class="a" style="left:29px;top:629px;width:11px;height:11px;box-sizing:border-box;border:1px solid #555;border-radius:2px;background:#fff;"></div>
<div class="t" style="left:59.85px;top:630.37px;font-size:12.2px;font-weight:400;color:#333;transform:scaleX(1.0146);transform-origin:0 0;">500738</div>
<div class="t" style="left:119.00px;top:630.37px;font-size:12.2px;font-weight:400;color:#333;transform:scaleX(1.0207);transform-origin:0 0;">3786</div>
<div class="t" style="left:119.00px;top:646.87px;font-size:9.6px;font-weight:400;color:#555;transform:scaleX(0.98);transform-origin:0 0;">JOGN, Mercy</div>
<div class="t" style="left:252.50px;top:630.37px;font-size:12.2px;font-weight:400;color:#333;transform:scaleX(0.9174);transform-origin:0 0;">ECOCONTRACT_DETAIL</div>
<div class="t" style="left:406.00px;top:630.67px;font-size:12.2px;font-weight:400;color:#333;">_</div>
<div class="t" style="left:406.00px;top:646.70px;font-size:9.8px;font-weight:400;color:#555;transform:scaleX(1.0165);transform-origin:0 0;">TSES Contract notification summary for given trade</div>
<div class="t" style="left:676.50px;top:630.37px;font-size:12.2px;font-weight:400;color:#333;transform:scaleX(1.0417);transform-origin:0 0;">2021-06-28</div>
<div class="a" style="left:797px;top:629px;width:11px;height:11px;box-sizing:border-box;border:1px solid #c4c4c4;border-radius:2px;background:#fff;"></div>
<div class="t" style="left:860.00px;top:630.37px;font-size:12.2px;font-weight:400;color:#333;">None</div>
<div class="t" style="left:860.00px;top:646.70px;font-size:9.8px;font-weight:400;color:#555;transform:scaleX(1.0220);transform-origin:0 0;">No scheduling is specified</div>
<div class="t" style="left:1009.60px;top:630.37px;font-size:12.2px;font-weight:400;color:#333;transform:scaleX(1.0148);transform-origin:0 0;">IsDisabled</div>
<div class="a" style="left:0px;top:5px;width:1085px;height:647px;background:rgba(0,0,0,0.4);"></div>
<div class="a" style="left:233px;top:192px;width:404px;height:283px;background:#fff;border-top:3px solid #0078d4;box-sizing:border-box;box-shadow:0 5px 20px rgba(0,0,0,0.35);"></div>
<div class="t" style="left:255.00px;top:212.99px;font-size:17.5px;font-weight:400;color:#333;transform:scaleX(1.0282);transform-origin:0 0;-webkit-text-stroke:0.2px #333;">Create for Customer Parameters</div>
<div class="t" style="left:262.50px;top:256.87px;font-size:12.2px;font-weight:400;color:#444;transform:scaleX(1.0104);transform-origin:0 0;">PartnerId</div>
<div class="a" style="left:317px;top:253px;width:255px;height:32px;background:#e2e5e9;"></div>
<div class="a" style="left:569px;top:250px;width:42px;height:38px;background:#dee1e6;border-radius:0 6px 6px 0;"></div>
<div class="a" style="left:572px;top:253px;width:36px;height:32px;background:#b8bdc6;border-radius:0 3px 3px 0;"></div>
<svg class="a" style="left:583px;top:263px" width="14" height="14" viewBox="0 0 14 14"><g fill="none" stroke="#46526a" stroke-width="1.6"><circle cx="5.8" cy="5.8" r="4.1"/><line x1="8.8" y1="8.8" x2="12.3" y2="12.3" stroke-linecap="round"/></g></svg>
<div class="t" style="left:262.50px;top:308.09px;font-size:12.3px;font-weight:400;color:#333;transform:scaleX(1.0771);transform-origin:0 0;-webkit-text-stroke:0.4px #333;">NotifyTypeId :</div>
<div class="a" style="left:346px;top:299px;width:262px;height:29px;box-sizing:border-box;background:#fff;border:1px solid #555;border-radius:2px;"></div>
<div class="t" style="left:354.50px;top:308.17px;font-size:12.2px;font-weight:400;color:#333;transform:scaleX(1.0323);transform-origin:0 0;">(none)</div>
<svg class="a" style="left:588px;top:310px" width="12" height="7" viewBox="0 0 12 7"><path d="M0.5 0.5 L5.5 5.5 L10.5 0.5" fill="none" stroke="#8a8a8a" stroke-width="1"/></svg>
<div class="t" style="left:262.50px;top:350.89px;font-size:12.3px;font-weight:400;color:#333;transform:scaleX(1.0221);transform-origin:0 0;-webkit-text-stroke:0.4px #333;">IsActive :</div>
<div class="a" style="left:316px;top:342px;width:292px;height:29px;box-sizing:border-box;background:#fff;border:1px solid #555;border-radius:2px;"></div>
<div class="t" style="left:324.50px;top:350.97px;font-size:12.2px;font-weight:400;color:#555;transform:scaleX(1.0344);transform-origin:0 0;">Select an option</div>
<svg class="a" style="left:590px;top:353px" width="12" height="7" viewBox="0 0 12 7"><path d="M0.5 0.5 L5.5 5.5 L10.5 0.5" fill="none" stroke="#8a8a8a" stroke-width="1"/></svg>
<div class="t" style="left:262.50px;top:389.97px;font-size:12.2px;font-weight:400;color:#444;transform:scaleX(1.0306);transform-origin:0 0;">TemplateId</div>
<div class="t" style="left:326.50px;top:389.97px;font-size:12.2px;font-weight:400;color:#aaa;">:</div>
<div class="a" style="left:328px;top:386px;width:280px;height:31px;background:#e2e5e9;border-radius:0 3px 3px 0;"></div>
<div class="a" style="left:572px;top:386px;width:36px;height:31px;background:#cbd0d8;border-radius:0 3px 3px 0;"></div>
<svg class="a" style="left:583px;top:394px" width="14" height="14" viewBox="0 0 14 14"><g fill="none" stroke="#46526a" stroke-width="1.6"><circle cx="5.8" cy="5.8" r="4.1"/><line x1="8.8" y1="8.8" x2="12.3" y2="12.3" stroke-linecap="round"/></g></svg>
<div class="a" style="left:414px;top:424px;width:104px;height:29px;background:#0078d4;border-radius:2px 0 0 2px;"></div>
<svg class="a" style="left:432px;top:431px" width="16" height="16" viewBox="0 0 16 16"><g stroke="#fff" stroke-width="1.5"><line x1="8" y1="0.5" x2="8" y2="15.5"/><line x1="0.5" y1="8" x2="15.5" y2="8"/></g></svg>
<div class="t" style="left:455.00px;top:434.27px;font-size:12.2px;font-weight:700;color:#fff;transform:scaleX(0.9489);transform-origin:0 0;">Execute</div>
<div class="a" style="left:518px;top:424px;width:97px;height:29px;box-sizing:border-box;background:#fff;border:1px solid #8a8a8a;border-radius:0 2px 2px 0;"></div>
<svg class="a" style="left:537px;top:433px" width="13" height="13" viewBox="0 0 13 13"><g stroke="#333" stroke-width="1"><line x1="1" y1="1" x2="12" y2="12"/><line x1="12" y1="1" x2="1" y2="12"/></g></svg>
<div class="t" style="left:558.00px;top:434.17px;font-size:12.2px;font-weight:400;color:#333;">Cancel</div>
<svg class="a" style="left:0;top:0" width="1085" height="652" viewBox="0 0 1085 652"><g fill="none" stroke="#e3191b" stroke-width="1.9" stroke-linecap="round" stroke-linejoin="round">
<path d="M629.2 254.8 L618.2 264.4"/><path d="M618.6 266.3 Q623 267.8 628.9 268.5"/><path d="M618.6 266 C628 263.5 640 261 650 259.2 L662.2 258.9"/>
<path d="M625.3 304.5 Q619 308.5 616.6 312.1 Q621 314 626 316.6"/><path d="M616.8 312 C624 311 631 310 636.6 309.2 C642 308 647 307 659.2 306"/>
<path d="M627 348.4 Q621 351 617.8 354 Q620 356.5 623.5 358.3"/><path d="M618 354.1 L655.2 354.2"/>
<path d="M625.7 389.2 Q620.5 393.5 617.4 398.5 Q620 402.5 624.9 406.2"/><path d="M617.6 398.4 L658.4 398.2"/>
<path d="M345.2 435.9 L403.6 435.9"/><path d="M397.7 429.4 L404 435.9 Q399 438 395.2 440.6"/>
</g></svg>
</body></html>\n
